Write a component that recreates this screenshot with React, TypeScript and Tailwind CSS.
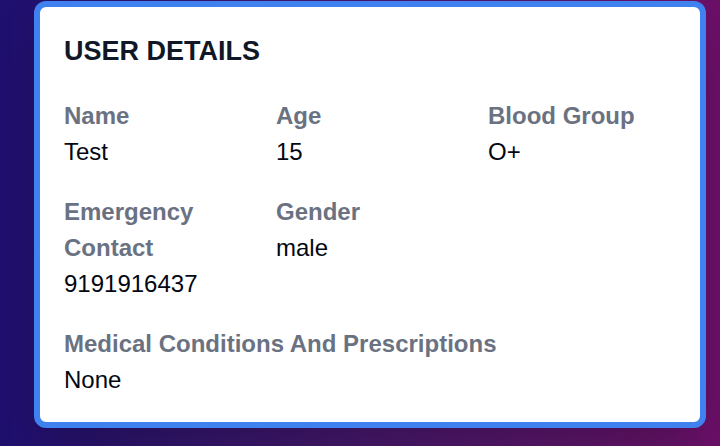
const FIELDS = [
  { label: 'Name', value: 'Test' },
  { label: 'Age', value: '15' },
  { label: 'Blood Group', value: 'O+' },
  { label: 'Emergency Contact', value: '9191916437' },
  { label: 'Gender', value: 'male' },
];

export default function App() {
  return (
    <div
      className="w-[720px] h-[446px] overflow-hidden bg-gradient-to-r from-[#1f0f6e] to-[#6b0f68] pl-[34px] pt-px"
      style={{ fontFamily: '"Liberation Sans", Arial, sans-serif' }}
    >
      <div className="w-[672px] rounded-xl border-[6px] border-[#3f82ef] bg-white p-6 shadow-2xl">
        <h2 className="text-[27px] leading-[41px] font-bold text-gray-900 mb-[26px]">USER DETAILS</h2>
        <div className="grid grid-cols-3 gap-6">
          {FIELDS.map((f) => (
            <div key={f.label}>
              <p className="text-2xl leading-9 font-bold text-gray-500">{f.label}</p>
              <p className="text-2xl leading-9 text-gray-950">{f.value}</p>
            </div>
          ))}
          <div className="col-span-3">
            <p className="text-2xl leading-9 font-bold text-gray-500">Medical Conditions And Prescriptions</p>
            <p className="text-2xl leading-9 text-gray-950">None</p>
          </div>
        </div>
      </div>
    </div>
  );
}
